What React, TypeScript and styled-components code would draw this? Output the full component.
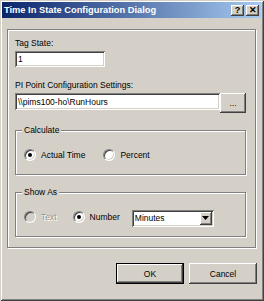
import React from 'react'
import styled, { createGlobalStyle } from 'styled-components'

const GlobalStyle = createGlobalStyle`
  html, body {
    margin: 0;
    padding: 0;
    background: #d4d0c8;
  }
`

const Window = styled.div`
  width: 264px;
  height: 301px;
  box-sizing: border-box;
  padding: 2px 3px 3px 2px;
  background: #d4d0c8;
  box-shadow: inset 1px 1px #d4d0c8, inset -1px -1px #404040, inset 2px 2px #fff, inset -2px -2px #808080;
  display: flex;
  flex-direction: column;
  font-family: 'Liberation Sans', Arial, sans-serif;
  font-size: 8.5px;
  color: #000;
`

const TitleBar = styled.div`
  height: 16px;
  display: flex;
  align-items: center;
  justify-content: space-between;
  padding: 0 2px;
  background: linear-gradient(to right, #0a246a, #a6caf0);
`

const Title = styled.span`
  color: #fff;
  font-weight: bold;
  font-size: 9.3px;
  line-height: 16px;
  white-space: nowrap;
`

const TitleButtons = styled.div`
  display: flex;
  gap: 2px;
`

const CaptionButton = styled.div`
  width: 13px;
  height: 11px;
  box-sizing: border-box;
  background: #d4d0c8;
  box-shadow: inset -1px -1px #404040, inset 1px 1px #fff, inset -2px -2px #808080;
  display: flex;
  align-items: center;
  justify-content: center;
  font-weight: bold;
  font-size: 9px;
  line-height: 1;
`

const Body = styled.div`
  padding: 11px 0 0 5px;
  display: flex;
  flex-direction: column;
`

const Etched = styled.div`
  box-sizing: border-box;
  border: 1px solid #808080;
  box-shadow: inset 1px 1px #fff, 1px 1px #fff;
`

const OuterGroup = styled(Etched)`
  width: 249px;
  height: 219px;
  padding: 7px 8px 0 7px;
  display: flex;
  flex-direction: column;
`

const Label = styled.div<{ $top?: number }>`
  line-height: 12px;
  margin-top: ${(p) => p.$top ?? 0}px;
  white-space: nowrap;
`

const TextBox = styled.div<{ $width: number; $height: number }>`
  width: ${(p) => p.$width}px;
  height: ${(p) => p.$height}px;
  box-sizing: border-box;
  background: #fff;
  box-shadow: inset 1px 1px #808080, inset -1px -1px #fff, inset 2px 2px #404040, inset -2px -2px #d4d0c8;
  padding: 0 3px;
  display: flex;
  align-items: center;
  white-space: nowrap;
  margin-top: 2px;
`

const InputRow = styled.div`
  display: flex;
  align-items: flex-start;
  margin-top: 2px;
`

const PushButton = styled.div<{ $width: number; $height: number; $default?: boolean }>`
  width: ${(p) => p.$width}px;
  height: ${(p) => p.$height}px;
  box-sizing: border-box;
  background: #d4d0c8;
  border: ${(p) => (p.$default ? '1px solid #000' : 'none')};
  box-shadow: inset -1px -1px #404040, inset 1px 1px #fff, inset -2px -2px #808080;
  display: flex;
  align-items: center;
  justify-content: center;
  white-space: nowrap;
`

const Group = styled(Etched)<{ $top: number }>`
  position: relative;
  width: 231px;
  height: 45px;
  margin-top: ${(p) => p.$top}px;
  padding: 0 0 0 8px;
  display: flex;
  align-items: center;
`

const Legend = styled.span`
  position: absolute;
  left: 6px;
  top: -7px;
  padding: 0 2px;
  line-height: 12px;
  background: #d4d0c8;
`

const Row = styled.div`
  display: flex;
  align-items: center;
  margin-top: 4px;
`

const RadioItem = styled.div<{ $gap: number }>`
  display: flex;
  align-items: center;
  gap: 5px;
  margin-right: ${(p) => p.$gap}px;
`

const Circle = styled.span<{ $checked?: boolean; $disabled?: boolean }>`
  position: relative;
  width: 12px;
  height: 12px;
  box-sizing: border-box;
  border-radius: 50%;
  border: 1px solid;
  border-color: #808080 #fff #fff #808080;
  background: ${(p) => (p.$disabled ? '#d4d0c8' : '#fff')};
  box-shadow: inset 1px 1px #404040, inset -1px -1px #d4d0c8;
  transform: rotate(0deg);

  &::after {
    content: '';
    display: ${(p) => (p.$checked ? 'block' : 'none')};
    position: absolute;
    left: 3px;
    top: 3px;
    width: 4px;
    height: 4px;
    border-radius: 50%;
    background: #000;
  }
`

const RadioText = styled.span<{ $disabled?: boolean }>`
  line-height: 12px;
  color: ${(p) => (p.$disabled ? '#9a9a9a' : '#000')};
  text-shadow: ${(p) => (p.$disabled ? '1px 1px #fff' : 'none')};
`

const Combo = styled(TextBox)`
  margin-top: 3px;
  justify-content: space-between;
  padding: 2px 2px 2px 3px;
`

const DropButton = styled.div`
  width: 12px;
  height: 13px;
  box-sizing: border-box;
  background: #d4d0c8;
  box-shadow: inset -1px -1px #404040, inset 1px 1px #fff, inset -2px -2px #808080;
  display: flex;
  align-items: center;
  justify-content: center;
`

const ButtonBar = styled.div`
  display: flex;
  justify-content: flex-end;
  gap: 5px;
  margin: 15px 4px 0 0;
`

const Radio = ({ label, checked, disabled, gap }: { label: string; checked?: boolean; disabled?: boolean; gap: number }) => (
  <RadioItem $gap={gap}>
    <Circle $checked={checked} $disabled={disabled} />
    <RadioText $disabled={disabled}>{label}</RadioText>
  </RadioItem>
)

const App = () => {
  return (
    <>
      <GlobalStyle />
      <Window>
        <TitleBar>
          <Title>Time In State Configuration Dialog</Title>
          <TitleButtons>
            <CaptionButton>?</CaptionButton>
            <CaptionButton>✕</CaptionButton>
          </TitleButtons>
        </TitleBar>
        <Body>
          <OuterGroup>
            <Label>Tag State:</Label>
            <TextBox $width={90} $height={16}>1</TextBox>
            <Label $top={12}>PI Point Configuration Settings:</Label>
            <InputRow>
              <TextBox $width={205} $height={17} style={{ marginTop: 0 }}>\\pims100-ho\RunHours</TextBox>
              <PushButton $width={26} $height={20}>...</PushButton>
            </InputRow>
            <Group $top={17}>
              <Legend>Calculate</Legend>
              <Row>
                <Radio label="Actual Time" checked gap={18} />
                <Radio label="Percent" gap={0} />
              </Row>
            </Group>
            <Group $top={17}>
              <Legend>Show As</Legend>
              <Row>
                <Radio label="Text" disabled gap={16} />
                <Radio label="Number" checked gap={12} />
                <Combo $width={82} $height={17}>
                  <span>Minutes</span>
                  <DropButton>
                    <svg width="7" height="4" viewBox="0 0 7 4">
                      <path d="M0 0h7L3.5 4z" fill="#000" />
                    </svg>
                  </DropButton>
                </Combo>
              </Row>
            </Group>
          </OuterGroup>
          <ButtonBar>
            <PushButton $width={68} $height={21} $default>OK</PushButton>
            <PushButton $width={68} $height={21}>Cancel</PushButton>
          </ButtonBar>
        </Body>
      </Window>
    </>
  )
}

export default App
